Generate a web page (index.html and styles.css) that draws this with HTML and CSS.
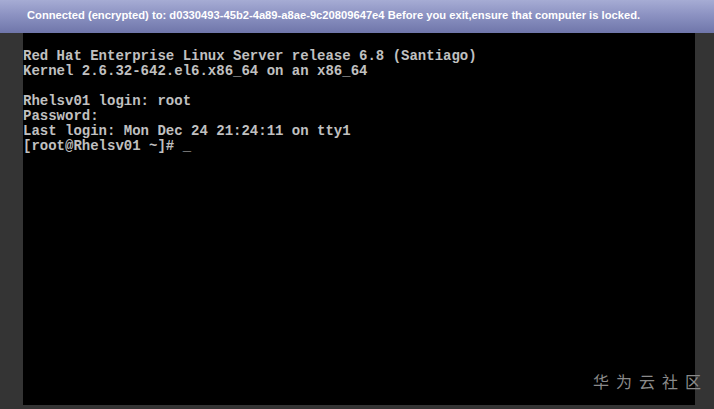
FILE: index.html
```html
<!DOCTYPE html>
<html>
<head>
<meta charset="utf-8">
<link rel="stylesheet" href="styles.css">
</head>
<body>
<div class="app">
  <div class="topbar">Connected (encrypted) to: d0330493-45b2-4a89-a8ae-9c20809647e4 Before you exit,ensure that computer is locked.</div>
  <div class="stage">
    <div class="terminal">
<pre class="console">Red Hat Enterprise Linux Server release 6.8 (Santiago)
Kernel 2.6.32-642.el6.x86_64 on an x86_64

Rhelsv01 login: root
Password:
Last login: Mon Dec 24 21:24:11 on tty1
[root@Rhelsv01 ~]# _</pre>
    </div>
    <div class="watermark">华为云社区</div>
  </div>
</div>
</body>
</html>
```

FILE: styles.css
```css
html, body {
  margin: 0;
  padding: 0;
  width: 714px;
  height: 409px;
  overflow: hidden;
  background: #333333;
}
.app {
  display: flex;
  flex-direction: column;
  width: 714px;
  height: 409px;
}
.topbar {
  height: 33px;
  box-sizing: border-box;
  padding: 9px 0 0 27px;
  background: linear-gradient(to bottom, #a6acd4 0%, #8c92c2 45%, #6f76aa 100%);
  color: #ffffff;
  font-family: "Liberation Sans", Arial, sans-serif;
  font-weight: bold;
  font-size: 11.2px;
  white-space: nowrap;
}
.stage {
  position: relative;
  flex: 1;
  display: flex;
  padding: 0 19px 4px 23px;
  background: #343434;
}
.terminal {
  flex: 1;
  background: #000000;
}
.console {
  margin: 0;
  padding: 16px 0 0 0;
  font-family: "Liberation Mono", "DejaVu Sans Mono", monospace;
  font-size: 14px;
  line-height: 15px;
  color: #c0c0c0;
  font-weight: bold;
}
.watermark {
  position: absolute;
  right: 6px;
  bottom: 16px;
  font-family: "Noto Sans CJK SC", sans-serif;
  font-size: 16px;
  letter-spacing: 7px;
  color: #8a8a8a;
}
```
